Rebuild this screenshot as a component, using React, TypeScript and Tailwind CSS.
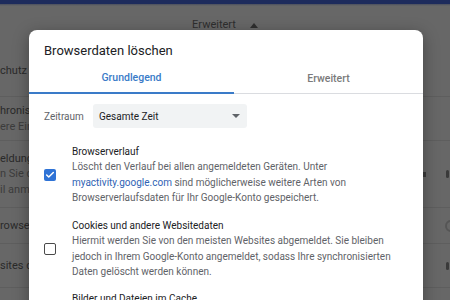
import { Check } from 'lucide-react';

const bgRows = [
    { h: 'h-[51px]', lines: [{ t: 'chutz', c: 'text-[#2a2a2a]' }] },
    { h: 'h-[44px]', lines: [{ t: 'hronis', c: 'text-[#2a2a2a]' }, { t: 'ere Ein', c: 'text-[#3c3c3c]' }] },
    { h: 'h-[67px]', lines: [{ t: 'eldung', c: 'text-[#2a2a2a]' }, { t: 'n Sie d', c: 'text-[#3c3c3c]' }, { t: 'il anm', c: 'text-[#3c3c3c]' }] },
    { h: 'h-[36px]', lines: [{ t: 'rowse', c: 'text-[#2a2a2a]' }] },
    { h: 'h-[44px]', lines: [{ t: 'sites d', c: 'text-[#2a2a2a]' }] },
    { h: 'h-[40px]', lines: [{ t: 'en vora', c: 'text-[#2a2a2a]' }] },
];

function Checkbox({ checked }: { checked: boolean }) {
    return checked ? (
        <div className="w-[12px] h-[12px] shrink-0 rounded-[2px] bg-[#2f73d6] flex items-center justify-center">
            <Check size={10} strokeWidth={3.5} className="text-white" />
        </div>
    ) : (
        <div className="w-[12px] h-[12px] shrink-0 rounded-[2px] border-[1.5px] border-[#4a4a4a]" />
    );
}

export default function App() {
    return (
        <div className="relative w-[450px] h-[300px] overflow-hidden bg-[#676767] font-[Roboto,sans-serif]">
            <div className="h-[4px] bg-[#1d2b5c]" />
            <div className="h-[2px] bg-gradient-to-b from-[#4a4f5e] to-[#676767]" />

            {/* page behind the dialog */}
            <div className="flex justify-center items-center h-[39px] gap-[14px] text-[11px] text-[#2e2e2e]">
                <span>Erweitert</span>
                <svg width="8" height="5" viewBox="0 0 8 5"><path d="M0 5 L4 0 L8 5 Z" fill="#2e2e2e" /></svg>
            </div>
            {bgRows.map((row, i) => (
                <div key={i} className={`${row.h} flex ${i > 0 ? 'border-t border-[#5e5e5e]' : ''}`}>
                    <div className="flex flex-col justify-center text-[11px] leading-[15.5px]">
                        {row.lines.map((l) => (
                            <span key={l.t} className={l.c}>{l.t}</span>
                        ))}
                    </div>
                    <div className="ml-auto flex items-center pr-[1px]">
                        {i === 2 && <span className="w-[5px] h-[5px] mr-[20px] bg-[#3a3a3a]" />}
                        {i === 2 && <span className="w-[3px] h-[8px] rounded-sm bg-[#3a3a3a]" />}
                        {i === 3 && <span className="w-[12px] h-[12px] mr-[-8px] rounded-full border-2 border-[#555]" />}
                        {i === 4 && <span className="w-[3px] h-[8px] rounded-sm bg-[#3a3a3a]" />}
                    </div>
                </div>
            ))}

            {/* dialog */}
            <div className="absolute left-[29px] top-[30px] w-[394px] h-[320px] bg-white rounded-[8px] shadow-[0_4px_16px_rgba(0,0,0,0.35)]">
                <div className="pl-[15px] pt-[13px] text-[13px] leading-[16px] text-[#202124]">Browserdaten löschen</div>
                <div className="flex mt-[5px] h-[30px] border-b border-[#dadce0]">
                    <div className="w-[205px] flex items-center justify-center text-[10.5px] font-medium text-[#3a7bc8] border-b-2 border-[#3a7bc8] -mb-px">Grundlegend</div>
                    <div className="flex-1 flex items-center justify-center text-[10.5px] font-medium text-[#7a7a7a]">Erweitert</div>
                </div>

                <div className="flex items-center mt-[10px] pl-[15px]">
                    <span className="w-[49px] text-[10px] text-[#5f6368]">Zeitraum</span>
                    <div className="w-[154px] h-[24px] bg-[#f1f3f4] rounded-[3px] flex items-center pl-[6px] pr-[7px]">
                        <span className="text-[10px] text-[#202124]">Gesamte Zeit</span>
                        <svg className="ml-auto" width="8" height="4" viewBox="0 0 8 4"><path d="M0 0 L8 0 L4 4 Z" fill="#5f6368" /></svg>
                    </div>
                </div>

                <div className="flex items-center gap-[16px] pl-[15px] mt-[16px]">
                    <Checkbox checked />
                    <div className="text-[10px] leading-[15.3px] text-[#5f6368]">
                        <div className="text-[#202124]">Browserverlauf</div>
                        <div>Löscht den Verlauf bei allen angemeldeten Geräten. Unter</div>
                        <div><span className="text-[#2f63b4]">myactivity.google.com</span> sind möglicherweise weitere Arten von</div>
                        <div>Browserverlaufsdaten für Ihr Google-Konto gespeichert.</div>
                    </div>
                </div>

                <div className="flex items-center gap-[16px] pl-[15px] mt-[13px]">
                    <Checkbox checked={false} />
                    <div className="text-[10px] leading-[15.3px] text-[#5f6368]">
                        <div className="text-[#202124]">Cookies und andere Websitedaten</div>
                        <div>Hiermit werden Sie von den meisten Websites abgemeldet. Sie bleiben</div>
                        <div>jedoch in Ihrem Google-Konto angemeldet, sodass Ihre synchronisierten</div>
                        <div>Daten gelöscht werden können.</div>
                    </div>
                </div>

                <div className="flex items-center gap-[16px] pl-[15px] mt-[12px]">
                    <Checkbox checked={false} />
                    <div className="text-[10px] leading-[15.3px] text-[#5f6368]">
                        <div className="text-[#202124]">Bilder und Dateien im Cache</div>
                        <div>Es werden bis zu 320 MB freigegeben. Einige Websites werden</div>
                        <div>bei Ihrem nächsten Besuch möglicherweise langsamer geladen.</div>
                    </div>
                </div>
            </div>
        </div>
    );
}
